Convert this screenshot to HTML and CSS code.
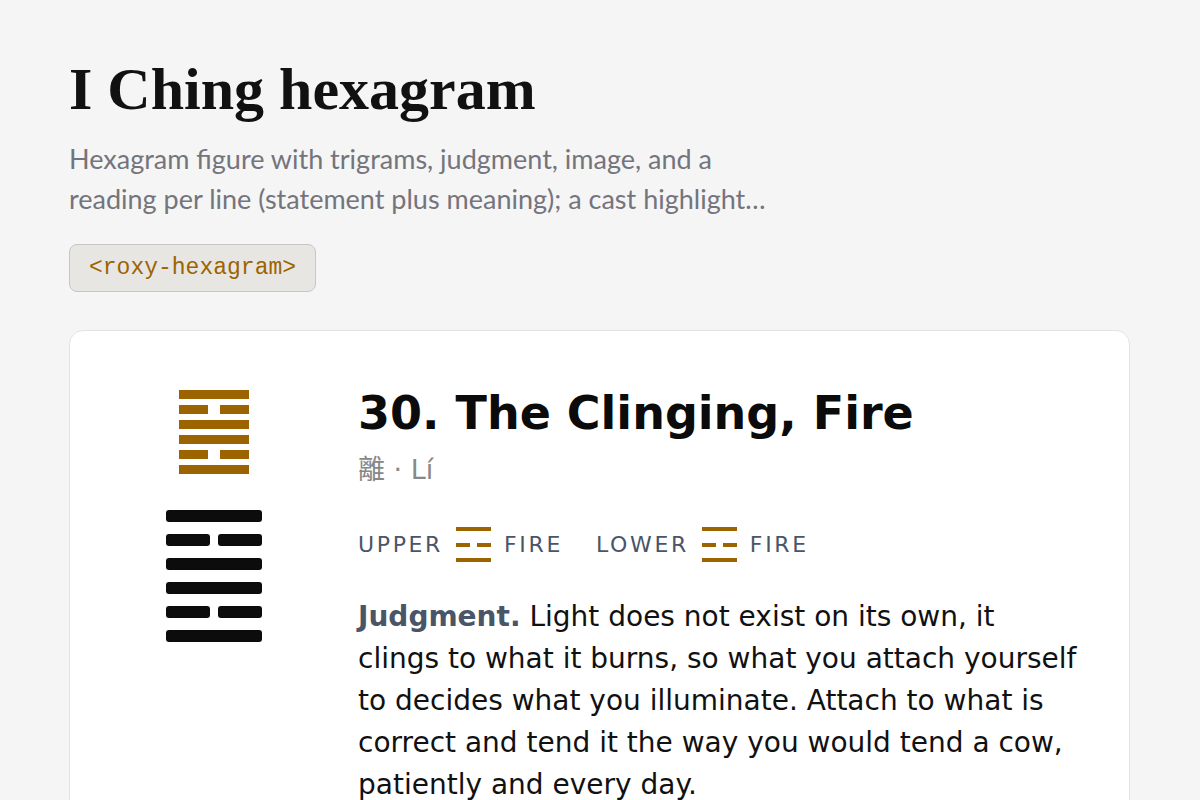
FILE: index.html
```html
<!DOCTYPE html>
<html lang="en">
<head>
    <meta charset="UTF-8">
    <meta name="viewport" content="width=device-width, initial-scale=1.0">
    <title>I Ching hexagram</title>
    <link rel="stylesheet" href="styles.css">
</head>
<body>
    <div class="page">
        <h1 class="page-title">I Ching hexagram</h1>
        <p class="page-desc">Hexagram figure with trigrams, judgment, image, and a<br>reading per line (statement plus meaning); a cast highlight…</p>
        <code class="tag">&lt;roxy-hexagram&gt;</code>

        <div class="card">
            <div class="figure">
                <div class="hex hex-small">
                    <div class="line"></div>
                    <div class="line broken"><span></span><span></span></div>
                    <div class="line"></div>
                    <div class="line"></div>
                    <div class="line broken"><span></span><span></span></div>
                    <div class="line"></div>
                </div>
                <div class="hex hex-big">
                    <div class="line"></div>
                    <div class="line broken"><span></span><span></span></div>
                    <div class="line"></div>
                    <div class="line"></div>
                    <div class="line broken"><span></span><span></span></div>
                    <div class="line"></div>
                </div>
            </div>

            <div class="reading">
                <h2 class="hex-name">30. The Clinging, Fire</h2>
                <div class="hex-sub">離 · Lí</div>

                <div class="trigrams">
                    <div class="trigram">
                        <span>UPPER</span>
                        <div class="tri">
                            <div class="line"></div>
                            <div class="line broken"><span></span><span></span></div>
                            <div class="line"></div>
                        </div>
                        <span>FIRE</span>
                    </div>
                    <div class="trigram">
                        <span>LOWER</span>
                        <div class="tri">
                            <div class="line"></div>
                            <div class="line broken"><span></span><span></span></div>
                            <div class="line"></div>
                        </div>
                        <span>FIRE</span>
                    </div>
                </div>

                <p class="text"><b>Judgment.</b> Light does not exist on its own, it clings to what it burns, so what you attach yourself to decides what you illuminate. Attach to what is correct and tend it the way you would tend a cow, patiently and every day.</p>
            </div>
        </div>
    </div>
</body>
</html>
```

FILE: styles.css
```css
body { margin: 0; background: #f5f5f5; color: #111; font-family: "DejaVu Sans", sans-serif; }
.page { padding: 56px 70px 40px 69px; }

.page-title { margin: 0; font-family: "Liberation Serif", serif; font-weight: bold; font-size: 60px; line-height: 66px; color: #111; }
.page-desc { margin: 17px 0 0; font-family: Lato, sans-serif; font-size: 27px; line-height: 40px; color: #74747c; white-space: nowrap; }
.tag { display: inline-block; margin-top: 25px; padding: 10px 19px; font-family: "Liberation Mono", monospace; font-size: 23px; line-height: 26px; color: #9b6400; background: #e8e6e3; border: 1px solid #c6c6c6; border-radius: 8px; }

.card { display: grid; grid-template-columns: 192px 1fr; gap: 48px; margin-top: 38px; padding: 55px 48px 48px; background: #fff; border: 1px solid #e3e3e3; border-radius: 14px; }

.figure { display: flex; flex-direction: column; align-items: center; gap: 36px; padding-top: 4px; }
.hex { display: flex; flex-direction: column; }
.hex .line, .tri .line { display: flex; justify-content: space-between; }
.hex .line.broken, .tri .line.broken { background: none !important; }
.hex-small { width: 70px; gap: 6px; }
.hex-small .line { height: 9px; background: #9b6400; }
.hex-small .broken span { width: 29px; background: #9b6400; }
.hex-big { width: 96px; gap: 12px; }
.hex-big .line { height: 12px; background: #0c0c0c; border-radius: 3px; }
.hex-big .broken span { width: 44px; background: #0c0c0c; border-radius: 3px; }

.hex-name { margin: 0; font-size: 46px; line-height: 55px; font-weight: bold; color: #0b0b0b; }
.hex-sub { margin-top: 11px; font-family: "DejaVu Sans", "Noto Sans CJK TC", sans-serif; font-size: 27px; line-height: 36px; color: #888; }

.trigrams { display: flex; gap: 33px; margin-top: 39px; font-size: 22px; letter-spacing: 0.12em; color: #4a5568; }
.trigram { display: flex; align-items: center; gap: 13px; }
.tri { display: flex; flex-direction: column; justify-content: space-between; width: 35px; height: 35px; }
.tri .line { height: 4px; background: #9b6400; }
.tri .broken span { width: 14px; background: #9b6400; }

.text { margin: 34px 0 0; font-size: 28px; line-height: 42px; color: #111; }
.text b { color: #4a5568; }
```
